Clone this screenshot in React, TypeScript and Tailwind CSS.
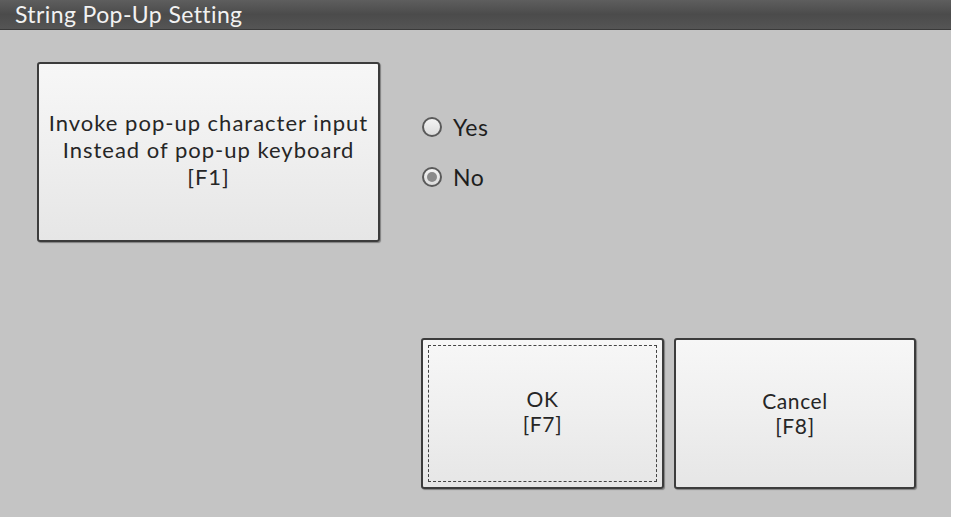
import { useState } from 'react';

const FONT = { fontFamily: 'Lato, "Open Sans", sans-serif' };

function Radio({ checked, label, onClick }: { checked: boolean; label: string; onClick: () => void }) {
  return (
    <button onClick={onClick} className="h-[30px] flex items-center gap-[11px] text-[23px] tracking-[0.5px] text-[#1e1e1e]">
      <span className="w-[20px] h-[20px] rounded-full border-2 border-[#5a5a5a] bg-gradient-to-b from-[#f4f4f4] to-[#dcdcdc] flex items-center justify-center">
        {checked && <span className="w-[10px] h-[10px] rounded-full bg-[#8a8a8a]" />}
      </span>
      <span>{label}</span>
    </button>
  );
}

function KeyButton({ lines, focused, className }: { lines: string[]; focused?: boolean; className: string }) {
  return (
    <button
      className={`relative rounded-[3px] border-2 border-[#3c3c3c] bg-gradient-to-b from-[#f7f7f7] via-[#efefef] to-[#e6e6e6] shadow-[1px_1px_1px_rgba(0,0,0,0.35)] flex flex-col items-center justify-center text-[#262626] ${className}`}
    >
      {focused && <span className="absolute inset-[5px] border border-dashed border-[#444]" />}
      {lines.map(l => (
        <span key={l} className="block">{l}</span>
      ))}
    </button>
  );
}

export default function App() {
  const [popup, setPopup] = useState(false);

  return (
    <div className="w-[959px] h-[528px] bg-white" style={FONT}>
      <div className="w-[951px] h-[517px] bg-[#c4c4c4] flex flex-col">
        <div className="h-[30px] bg-gradient-to-b from-[#5e5e5e] via-[#4b4b4b] to-[#555] border-b border-[#3a3a3a] flex items-center pl-[15px] text-[23px] tracking-[0.4px] text-[#f2f2f2]">
          String Pop-Up Setting
        </div>

        <div className="flex pl-[37px] pt-[32px]">
          <KeyButton
            className="w-[343px] h-[180px] text-[22px] leading-[27px] tracking-[1px] pb-[6px]"
            lines={['Invoke pop-up character input', 'Instead of pop-up keyboard', '[F1]']}
          />
          <div className="ml-[42px] pt-[50px] flex flex-col gap-[20px]">
            <Radio checked={popup} label="Yes" onClick={() => setPopup(true)} />
            <Radio checked={!popup} label="No" onClick={() => setPopup(false)} />
          </div>
        </div>

        <div className="flex justify-end gap-[10px] pr-[35px] mt-[96px]">
          <KeyButton focused className="w-[243px] h-[151px] text-[21px] leading-[25px] tracking-[0.6px] pb-[6px]" lines={['OK', '[F7]']} />
          <KeyButton className="w-[242px] h-[151px] text-[21px] leading-[25px] tracking-[0.6px] pb-[2px]" lines={['Cancel', '[F8]']} />
        </div>
      </div>
    </div>
  );
}
